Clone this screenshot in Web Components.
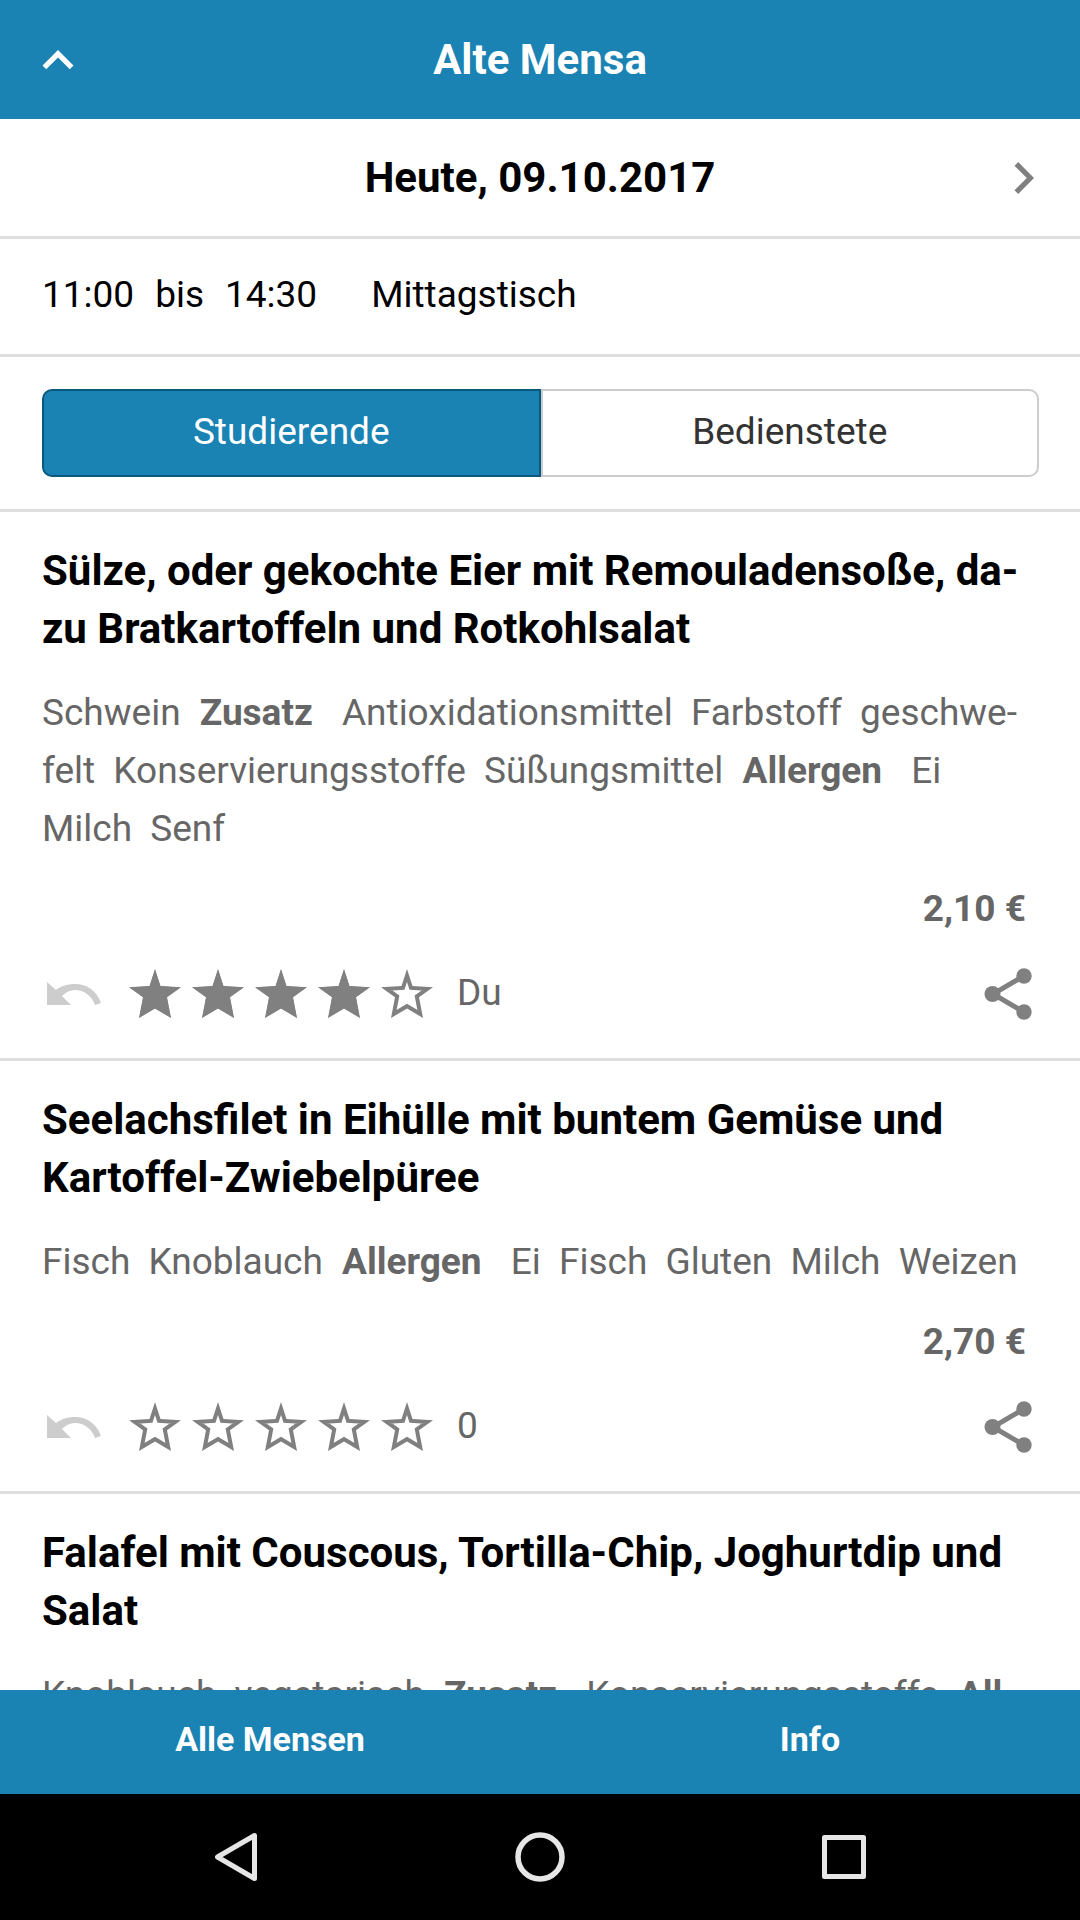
<!DOCTYPE html>
<html lang="de">
<head>
<meta charset="utf-8">
<meta name="viewport" content="width=device-width, initial-scale=1">
<title>Alte Mensa</title>
<style>
  html, body { height: 100%; margin: 0; }
  body { font-family: Roboto, "Noto Sans", sans-serif; font-size: 37px; line-height: 58px; color: #000; background: #fff; }
</style>
</head>
<body>
<mensa-app>
  <app-header slot="top">Alte Mensa</app-header>
  <day-switch>Heute, 09.10.2017</day-switch>
  <opening-hours from="11:00" to="14:30">Mittagstisch</opening-hours>
  <price-group></price-group>

  <meal-card price="2,10 €" rating="4" note="Du">
    <span slot="name">Sülze, oder gekochte Eier mit Remouladensoße, da&shy;<span>zu Bratkartoffeln und Rotkohlsalat</span></span>
    <span>Schwein</span> <b>Zusatz</b> <span>Antioxidationsmittel</span> <span>Farbstoff</span> <span>geschwe&shy;<span>felt</span></span> <span>Konservierungsstoffe</span> <span>Süßungsmittel</span> <b>Allergen</b> <span>Ei</span> <span>Milch</span> <span>Senf</span>
  </meal-card>

  <meal-card price="2,70 €" rating="0" note="0">
    <span slot="name">Seelachsfilet in Eihülle mit buntem Gemüse und Kartoffel-Zwiebelpüree</span>
    <span>Fisch</span> <span>Knoblauch</span> <b>Allergen</b> <span>Ei</span> <span>Fisch</span> <span>Gluten</span> <span>Milch</span> <span>Weizen</span>
  </meal-card>

  <meal-card>
    <span slot="name">Falafel mit Couscous, Tortilla-Chip, Joghurtdip und Salat</span>
    <span>Knoblauch</span> <span>vegetarisch</span> <b>Zusatz</b> <span>Konservierungsstoffe</span> <b>All&shy;<span>ergen</span></b>
  </meal-card>

  <tab-bar slot="bottom">
    <button type="button">Alle Mensen</button>
    <button type="button">Info</button>
  </tab-bar>
  <system-nav slot="bottom"></system-nav>
</mensa-app>

<script>
const RESET = `
  :host, *, *::before, *::after { box-sizing: border-box; }
  button { margin: 0; padding: 0; border: 0; background: none; font: inherit; color: inherit; cursor: pointer; }
  svg { display: block; }
`;

function define(name, css, markup) {
  customElements.define(name, class extends HTMLElement {
    constructor() {
      super();
      this.attachShadow({ mode: "open" });
    }
    connectedCallback() {
      const html = typeof markup === "function" ? markup(this) : markup;
      this.shadowRoot.innerHTML = `<style>${RESET}${css}</style>${html}`;
    }
  });
}

define("mensa-app", `
  :host { display: flex; flex-direction: column; height: 100vh; background: #fff; }
  main { flex: 1; min-height: 0; overflow-y: auto; scrollbar-width: none; }
`, `
  <slot name="top"></slot>
  <main><slot></slot></main>
  <slot name="bottom"></slot>
`);

define("app-header", `
  :host { display: grid; grid-template-columns: 116px 1fr 116px; align-items: center; flex: none; height: 119px; background: #1a83b4; color: #fff; }
  button { height: 100%; padding-left: 42px; }
  h1 { margin: 0; font-size: 42px; font-weight: 700; line-height: 58px; text-align: center; }
`, `
  <button type="button" aria-label="Zurück">
    <svg width="32" height="20" viewBox="0 0 32 20"><path d="M16 0L31.500 15.500L27.800 19.200L16 7.600L4.200 19.200L.5 15.500Z" fill="#fff"/></svg>
  </button>
  <h1><slot></slot></h1>
`);

define("day-switch", `
  :host { display: grid; grid-template-columns: 116px 1fr 116px; align-items: center; height: 120px; border-bottom: 3px solid #dedede; }
  h2 { grid-column: 2; margin: 0; font-size: 42px; font-weight: 700; line-height: 58px; text-align: center; }
  button { display: flex; align-items: center; justify-content: flex-end; height: 100%; padding-right: 46px; }
`, `
  <h2><slot></slot></h2>
  <button type="button" aria-label="Nächster Tag">
    <svg width="20" height="32" viewBox="0 0 20 32"><path d="M4.200 0L20 16L4.200 32L.5 28.300L12.800 16L.5 3.700Z" fill="#808080"/></svg>
  </button>
`);

define("opening-hours", `
  :host { display: flex; padding: 27px 42px 30px; border-bottom: 3px solid #dedede; }
  .time { display: flex; gap: 21px; margin-right: 54px; }
`, el => `
  <div class="time"><time>${el.getAttribute("from")}</time><span>bis</span><time>${el.getAttribute("to")}</time></div>
  <slot></slot>
`);

define("price-group", `
  :host { display: flex; padding: 32px 41px 32px 42px; border-bottom: 3px solid #dedede; }
  button { flex: 1; height: 88px; padding-bottom: 2px; border: 2px solid #ccc; color: #333; background: #fff; }
  button:first-of-type { border-radius: 10px 0 0 10px; border-right-width: 0; }
  button:last-of-type { border-radius: 0 10px 10px 0; }
  button[aria-pressed=true] { border: 2px solid #0b587d; background: #1a83b4; color: #fff; }
`, `
  <button type="button" aria-pressed="true">Studierende</button><button type="button" aria-pressed="false">Bedienstete</button>
`);

const STAR = "M26 0L31.500 17L52 18.300L38 28.300L42 49L26 39.500L10 49L14 28.300L0 18.300L20.500 17Z";

define("star-button", `
  :host, button { display: block; }
`, el => `
  <button type="button" aria-label="${el.getAttribute("label")}">
    <svg width="52" height="50" viewBox="0 0 52 50">
      <clipPath id="edge"><path d="${STAR}"/></clipPath>
      <path d="${STAR}" clip-path="url(#edge)" fill="${el.hasAttribute("filled") ? "#808080" : "none"}" stroke="#808080" stroke-width="8"/>
    </svg>
  </button>
`);

define("meal-card", `
  :host { display: block; padding: 30px 42px 36px; border-bottom: 3px solid #dedede; color: #666; }
  h3 { margin: 0 0 26px; font-size: 42px; font-weight: 700; line-height: 58px; color: #000; }
  p { margin: 0; }
  .details ::slotted(span) { margin-right: 9px; }
  .details ::slotted(b) { margin: 0 20px 0 1px; }
  .price { margin: 22px 0 26px; padding-right: 12px; text-align: right; font-weight: 700; }
  .actions { display: flex; align-items: center; }
  .stars { display: flex; gap: 11px; margin: 0 24px 0 27px; padding-top: 2px; }
  .undo { padding: 2px 0 0 5px; }
  .share { margin-left: auto; padding: 2px 6px 0 0; }
`, el => {
  const rating = Number(el.getAttribute("rating"));
  const stars = [1, 2, 3, 4, 5].map(n =>
    `<star-button label="${n} Sterne"${n <= rating ? " filled" : ""}></star-button>`).join("");
  return `
  <h3><slot name="name"></slot></h3>
  <p class="details"><slot></slot></p>
  ${el.hasAttribute("price") ? `
  <p class="price">${el.getAttribute("price")}</p>
  <div class="actions">
    <button class="undo" type="button" aria-label="Bewertung zurücknehmen">
      <svg width="55" height="24" viewBox="0 0 55 24"><path d="M0 0V23H24L15 14C19 10 23 8 28 8C37 8 45 14 48 23L54 21C50 9 40 2 28 2C21 2 14 4 9 8Z" fill="#cdcdcd"/></svg>
    </button>
    <div class="stars">${stars}</div>
    <span>${el.getAttribute("note")}</span>
    <button class="share" type="button" aria-label="Teilen">
      <svg width="48" height="54" viewBox="0 0 48 54" fill="#808080"><path d="M40 9L9 27L40 45" fill="none" stroke="#808080" stroke-width="5"/><circle cx="40" cy="9" r="7.700"/><circle cx="8.500" cy="27" r="8"/><circle cx="40" cy="45" r="7.700"/></svg>
    </button>
  </div>` : ""}`;
});

define("tab-bar", `
  :host { display: flex; flex: none; height: 104px; background: #1a83b4; color: #fff; }
  ::slotted(button) { flex: 1; margin: 0; padding: 0 0 6px; border: 0; background: none; color: inherit; font: inherit; font-size: 34px; font-weight: 700; }
`, `<slot></slot>`);

define("system-nav", `
  :host { display: flex; justify-content: center; flex: none; height: 126px; background: #000; }
  button { display: grid; place-items: center; width: 304px; height: 100%; }
  svg { fill: none; stroke: #e6e6e6; stroke-linejoin: round; }
`, `
  <button type="button" aria-label="Zurück"><svg width="50" height="50" viewBox="0 0 50 50"><path d="M43.500 3.500V46.500L6.500 25Z" stroke-width="5"/></svg></button>
  <button type="button" aria-label="Startseite"><svg width="50" height="50" viewBox="0 0 50 50"><circle cx="25" cy="25" r="22" stroke-width="5.500"/></svg></button>
  <button type="button" aria-label="Übersicht"><svg width="50" height="50" viewBox="0 0 50 50"><path d="M5.500 5.500H44.500V44.500H5.500Z" stroke-width="5"/></svg></button>
`);
</script>
</body>
</html>
